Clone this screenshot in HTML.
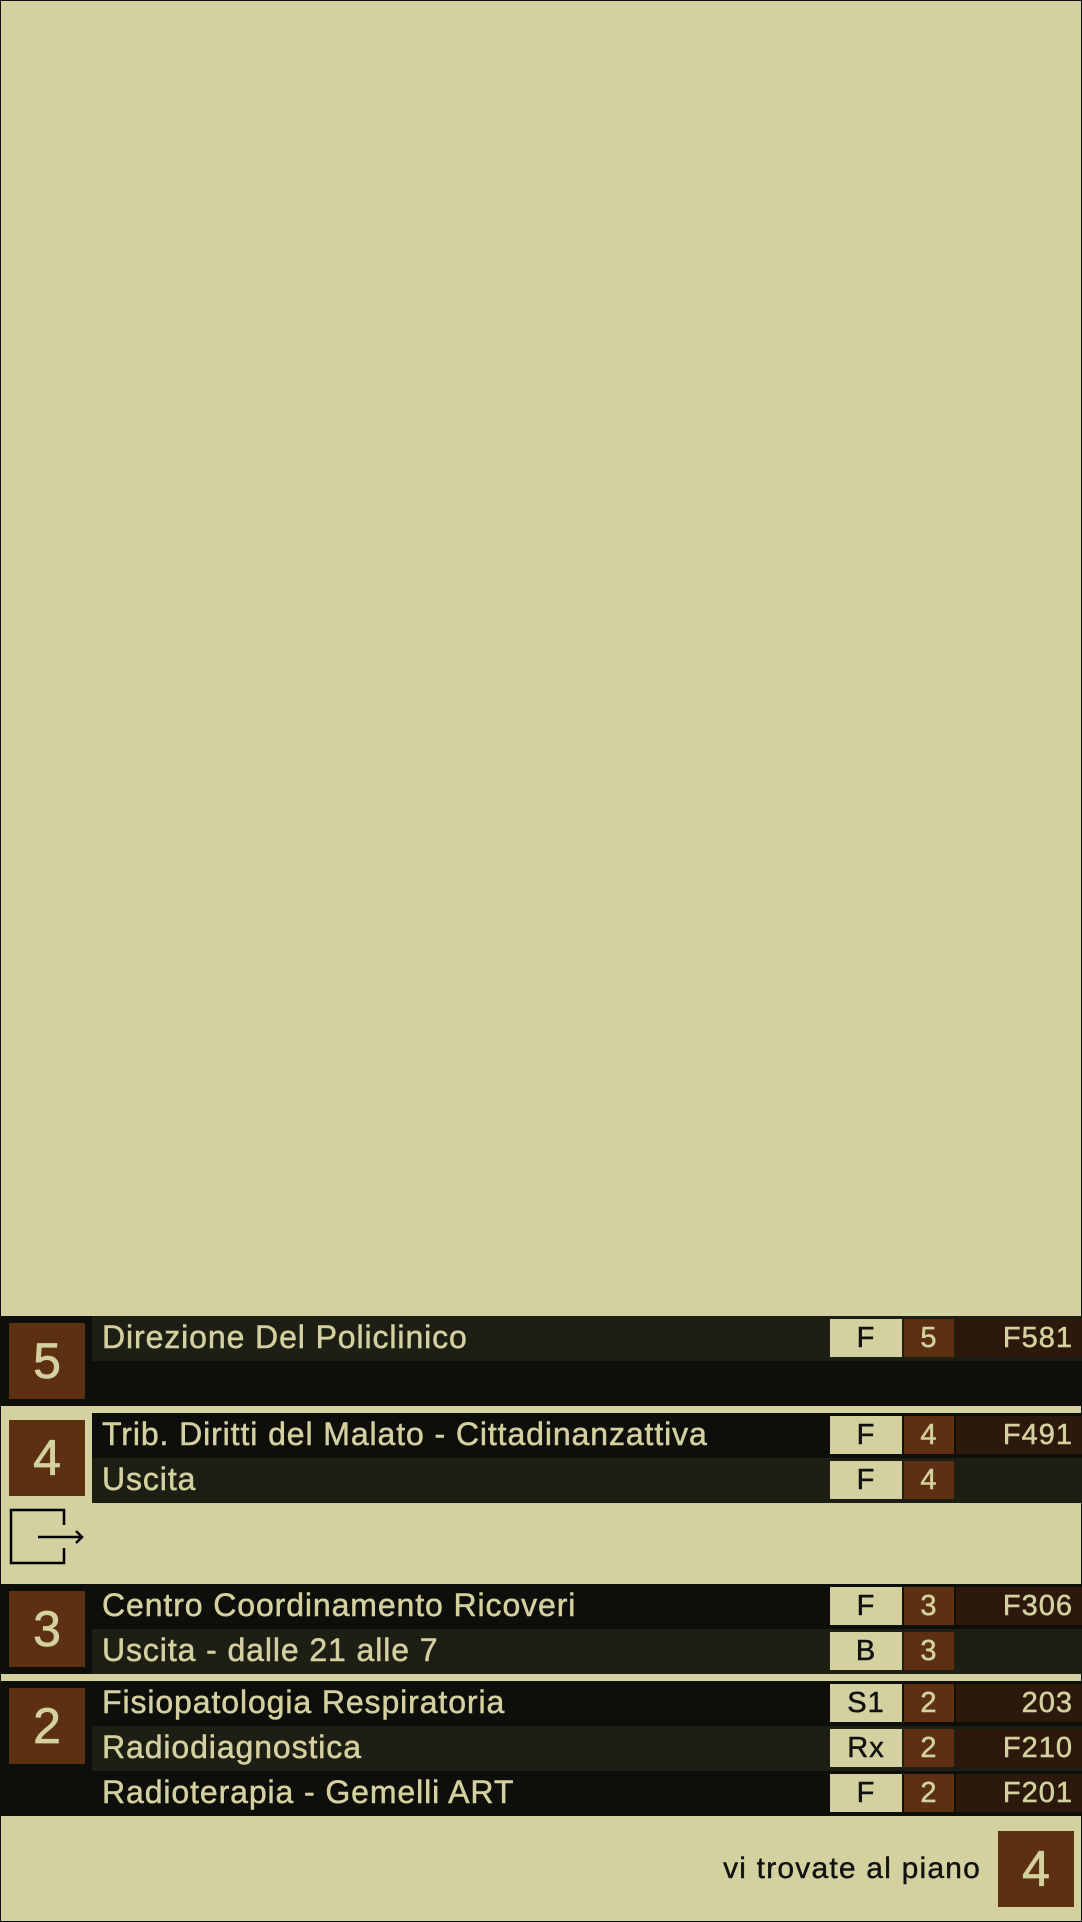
<!DOCTYPE html>
<html><head><meta charset="utf-8"><style>
*{margin:0;padding:0;box-sizing:border-box}
html,body{width:1082px;height:1922px;overflow:hidden}
body{background:#d3d1a0;font-family:"Liberation Sans",sans-serif;position:relative;border:1px solid #111}
.a{position:absolute}
.blk{position:absolute;left:0;width:1082px;background:#0e0f0a}
.row{position:absolute;left:91px;width:991px;height:45px;color:#d3d1a0;font-size:32px;line-height:43px;padding-left:10px;letter-spacing:0.9px;-webkit-text-stroke:0.5px #d3d1a0;white-space:nowrap}
.l{background:#1e1f14}
.d{background:#0e0f0a}
.f,.n,.c{letter-spacing:1px}
.f{position:absolute;left:738px;top:3px;width:72px;height:38px;background:#d3d1a0;color:#111;text-align:center;line-height:38px;font-size:29px;padding:0;-webkit-text-stroke:0.5px #111}
.n{position:absolute;left:812px;top:3px;width:50px;height:38px;background:#5c3011;color:#d3d1a0;text-align:center;line-height:38px;font-size:29px}
.c{position:absolute;left:864px;top:3px;width:126px;height:38px;background:#2d190b;color:#d3d1a0;text-align:right;line-height:38px;font-size:29px;padding-right:9px}
.num{position:absolute;left:8px;width:76px;height:76px;background:#5c3011;color:#d3d1a0;font-size:50px;text-align:center;line-height:76px;-webkit-text-stroke:0.7px #d3d1a0}
</style></head><body>
<div class="blk" style="top:1315px;height:90px"></div>
<div class="num" style="top:1322px">5</div>
<div class="row l" style="top:1315px">Direzione Del Policlinico<div class="f">F</div><div class="n">5</div><div class="c">F581</div></div>

<div class="num" style="top:1419px">4</div>
<div class="row d" style="top:1412px">Trib. Diritti del Malato - Cittadinanzattiva<div class="f">F</div><div class="n">4</div><div class="c">F491</div></div>
<div class="row l" style="top:1457px">Uscita<div class="f">F</div><div class="n">4</div></div>
<svg class="a" style="left:8px;top:1507px" width="78" height="58" viewBox="0 0 78 58"><path d="M55 17V2H2V55H55V40" fill="none" stroke="#000" stroke-width="2.5"/><path d="M29 29H73M67 23L73 29L67 35" fill="none" stroke="#000" stroke-width="2.5"/></svg>

<div class="blk" style="top:1583px;height:90px"></div>
<div class="num" style="top:1590px">3</div>
<div class="row d" style="top:1583px">Centro Coordinamento Ricoveri<div class="f">F</div><div class="n">3</div><div class="c">F306</div></div>
<div class="row l" style="top:1628px">Uscita - dalle 21 alle 7<div class="f">B</div><div class="n">3</div></div>

<div class="blk" style="top:1680px;height:135px"></div>
<div class="num" style="top:1687px">2</div>
<div class="row d" style="top:1680px">Fisiopatologia Respiratoria<div class="f">S1</div><div class="n">2</div><div class="c">203</div></div>
<div class="row l" style="top:1725px">Radiodiagnostica<div class="f">Rx</div><div class="n">2</div><div class="c">F210</div></div>
<div class="row d" style="top:1770px">Radioterapia - Gemelli ART<div class="f">F</div><div class="n">2</div><div class="c">F201</div></div>

<div class="a" style="right:100px;top:1848px;font-size:30px;color:#111;line-height:40px;letter-spacing:1.2px;-webkit-text-stroke:0.4px #111">vi trovate al piano</div>
<div class="num" style="left:997px;top:1830px">4</div>
</body></html>
